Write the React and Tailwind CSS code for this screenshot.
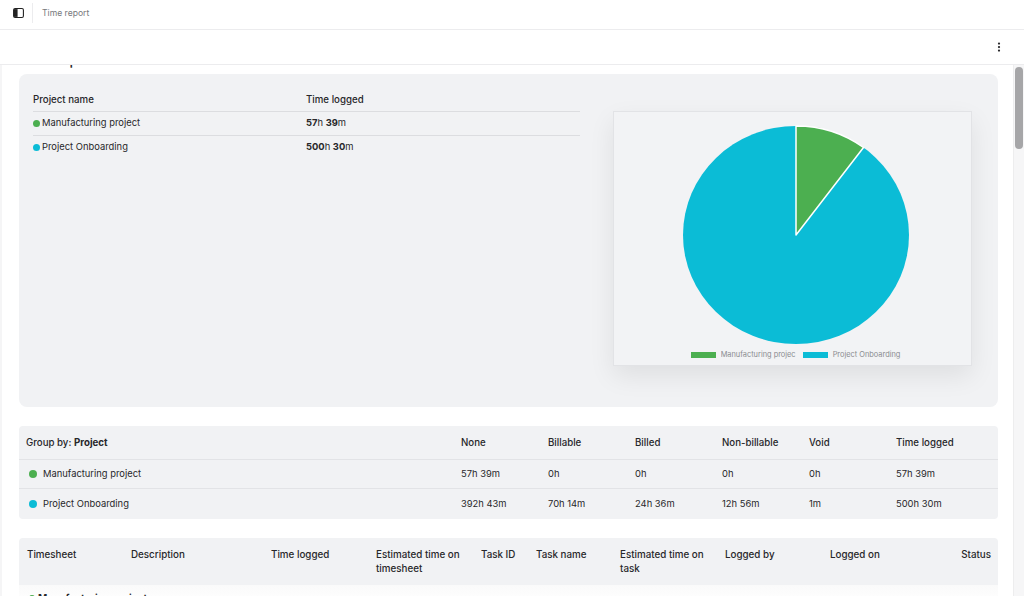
import React from "react";
import { EllipsisVertical } from "lucide-react";

const GREEN = "bg-[#4caf50]";
const BLUE = "bg-[#0bbcd6]";

const groupRows = [
  { name: "Manufacturing project", color: GREEN, vals: ["57h 39m", "0h", "0h", "0h", "0h", "57h 39m"] },
  { name: "Project Onboarding", color: BLUE, vals: ["392h 43m", "70h 14m", "24h 36m", "12h 56m", "1m", "500h 30m"] },
];

const groupCols = "grid grid-cols-[435px_87px_87px_87px_87px_87px_1fr] items-center";

const SummaryCard = () => {
  return (
    <div className="h-[333px] bg-[#f1f2f4] rounded-lg flex pl-[14px]">
      <div className="w-[547px] pt-[18px] text-[#27272a] text-[9.4px]">
        <div className="grid grid-cols-[273px_1fr] items-start font-medium text-[9.7px] leading-4 border-b border-[#dcdde0] h-[20px]">
          <div>Project name</div>
          <div>Time logged</div>
        </div>
        <div className="grid grid-cols-[273px_1fr] items-center h-[24px] border-b border-[#dcdde0]">
          <div className="flex items-center gap-[2px]">
            <span className={`w-[7px] h-[7px] rounded-full ${GREEN}`} />
            Manufacturing project
          </div>
          <div><b className="font-bold">57</b>h <b className="font-bold">39</b>m</div>
        </div>
        <div className="grid grid-cols-[273px_1fr] items-center h-[23px]">
          <div className="flex items-center gap-[2px]">
            <span className={`w-[7px] h-[7px] rounded-full ${BLUE}`} />
            Project Onboarding
          </div>
          <div><b className="font-bold">500</b>h <b className="font-bold">30</b>m</div>
        </div>
      </div>
      <div className="ml-[33px] mt-[37px] w-[359px] h-[255px] border border-[#e2e3e6] bg-[#f2f3f5] shadow-[0_10px_24px_rgba(0,0,0,0.08)] flex flex-col items-center">
        <svg width="230" height="222" viewBox="0 0 230 222" className="mt-[12px] ml-[6px] shrink-0">
          <ellipse cx="115" cy="111" rx="113" ry="109" fill="#0bbcd6" />
          <path d="M115 111 L115 2 A113 109 0 0 1 182.5 23.5 Z" fill="#4caf50" stroke="#ffffff" strokeWidth="1.5" strokeLinejoin="round" />
        </svg>
        <div className="flex items-center ml-[6px] mt-[3px] text-[7.4px] leading-3 text-[#8a8c90]">
          <span className={`w-[25px] h-[6px] ${GREEN}`} />
          <span className="ml-[5px] w-[75px] overflow-hidden whitespace-nowrap">Manufacturing projec</span>
          <span className={`ml-[7px] w-[25px] h-[6px] ${BLUE}`} />
          <span className="ml-[5px] whitespace-nowrap">Project Onboarding</span>
        </div>
      </div>
    </div>
  );
};

const GroupTable = () => {
  return (
    <div className="mt-[19px] h-[93px] bg-[#f1f2f4] rounded text-[#27272a] text-[9.4px]">
      <div className={`${groupCols} h-[34px] pl-[7px] pt-[1px] border-b border-[#e2e3e6] font-medium text-[9.7px]`}>
        <div>Group by: <b className="font-bold">Project</b></div>
        <div>None</div>
        <div>Billable</div>
        <div>Billed</div>
        <div>Non-billable</div>
        <div>Void</div>
        <div>Time logged</div>
      </div>
      {groupRows.map((row, i) => {
        return (
          <div
            key={row.name}
            className={`${groupCols} h-[29px] pl-[7px] pt-[1px] ${i === 0 ? "border-b border-[#e2e3e6]" : ""}`}
          >
            <div className="flex items-center gap-[6px] pl-[3px]">
              <span className={`w-2 h-2 rounded-full ${row.color}`} />
              {row.name}
            </div>
            {row.vals.map((v, j) => {
              return <div key={j}>{v}</div>;
            })}
          </div>
        );
      })}
    </div>
  );
};

const TimesheetTable = () => {
  return (
    <div className="mt-[19px]">
      <div className="h-[47px] bg-[#f1f2f4] rounded-t pt-[10px] pl-2 pr-[7px] grid grid-cols-[104px_140px_105px_105px_55px_84px_105px_105px_1fr] items-start leading-[13.5px] font-medium text-[9.8px] text-[#27272a]">
        <div>Timesheet</div>
        <div>Description</div>
        <div>Time logged</div>
        <div>Estimated time on timesheet</div>
        <div>Task ID</div>
        <div>Task name</div>
        <div className="pr-1">Estimated time on task</div>
        <div>Logged by</div>
        <div className="flex justify-between">
          <span>Logged on</span>
          <span>Status</span>
        </div>
      </div>
      <div className="h-[20px] bg-gradient-to-b from-[#fafafa] to-white pl-[10px] pt-[5px] flex items-center gap-[3px] font-bold text-[10px] leading-[16px]">
        <span className={`w-[6px] h-[6px] rounded-full ${GREEN}`} />
        Manufacturing project
      </div>
    </div>
  );
};

const App = () => {
  return (
    <div className="w-[1024px] h-[596px] overflow-hidden bg-white flex flex-col font-['Inter',sans-serif] text-[9.4px] text-[#27272a]">
      <div className="h-[30px] shrink-0 border-b border-[#ececee] flex items-center pl-[13px] pb-[3px]">
        <svg width="11" height="10" viewBox="0 0 12 11" fill="none" className="shrink-0">
          <rect x="0.6" y="0.6" width="10.8" height="9.8" rx="1.6" stroke="#222" strokeWidth="1.2" />
          <path d="M1 1.2h4v8.6H1z" fill="#222" />
        </svg>
        <div className="ml-[8px] w-px h-5 bg-[#ececee]" />
        <div className="ml-[9px] text-[#77797d] text-[8.6px]">Time report</div>
      </div>
      <div className="h-[35px] shrink-0 border-b border-[#ececee] flex items-center justify-end pr-[19px]">
        <EllipsisVertical size={12} strokeWidth={2.5} color="#27272a" />
      </div>
      <div className="flex-1 min-h-0 flex border-l-[2px] border-[#f5f5f6]">
        <div className="flex-1 min-w-0 overflow-hidden pl-[17px] pr-[15px]">
          <div className="-mt-[14px] h-[23px] leading-[18px] text-[14px] font-medium text-[#27272a]">Time report</div>
          <SummaryCard />
          <GroupTable />
          <TimesheetTable />
        </div>
        <div className="w-[11px] shrink-0 bg-[#f6f6f7] border-l border-[#ededee] pt-[2px] pl-[1px]">
          <div className="w-[8px] h-[82px] rounded-full bg-[#a6a6a8]" />
        </div>
      </div>
    </div>
  );
};

export default App;
